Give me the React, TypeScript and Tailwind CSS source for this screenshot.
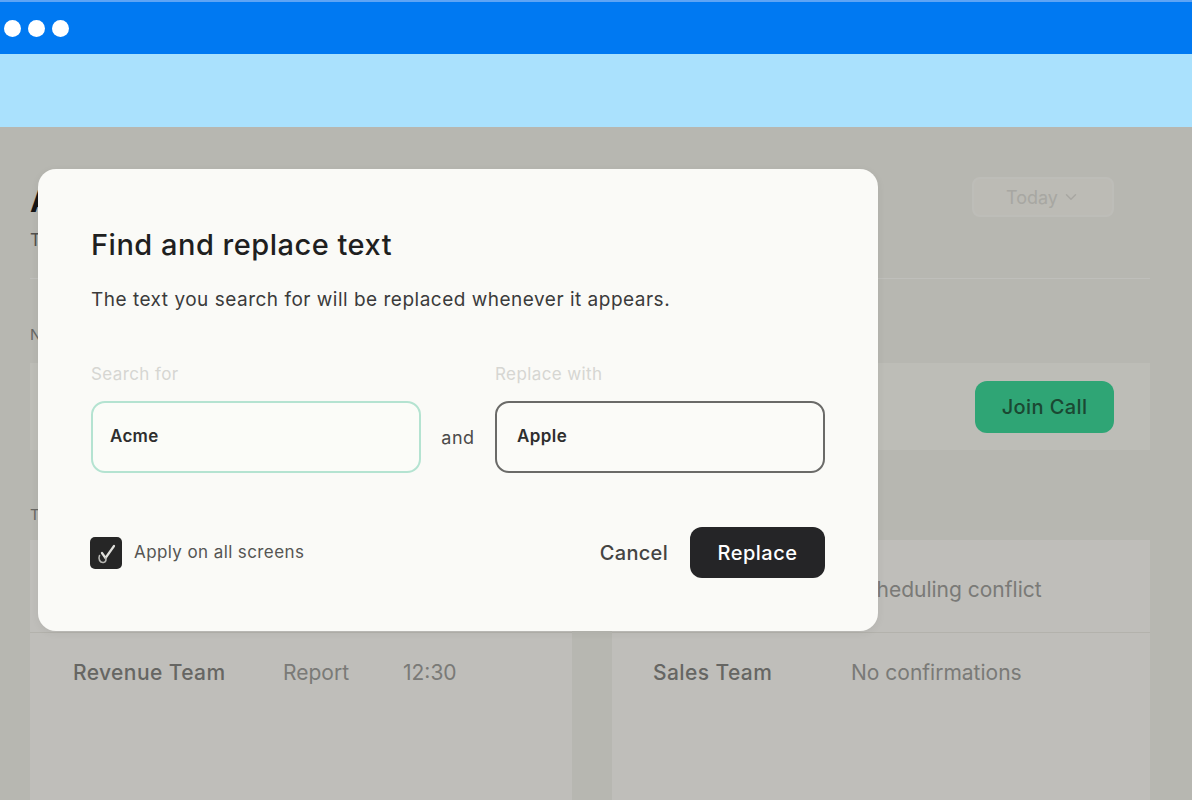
import { ChevronDown } from 'lucide-react'

const font = { fontFamily: 'Inter, "Noto Sans", sans-serif' }

const leftRows = [
  { team: 'Marketing Team', type: 'Review', time: '10:00' },
  { team: 'Revenue Team', type: 'Report', time: '12:30' },
]

const rightRows = [
  { team: 'Design Team', status: 'Scheduling conflict' },
  { team: 'Sales Team', status: 'No confirmations' },
]

const Dashboard = () => (
  <div className="h-full bg-[#f5f4ec] pl-[30px] pr-[42px] pt-[50px]">
    {/* Header */}
    <div className="flex items-start justify-between pr-[36px]">
      <div>
        <h1 className="pt-[4px] text-[30px] font-bold leading-[40px] text-[#1c1c1c]">Agenda</h1>
        <p className="mt-[8px] text-[17px] leading-[22px] text-[#6b6b68]">Thursday, March 14</p>
      </div>
      <button className="flex h-[40px] w-[142px] items-center justify-center gap-1 rounded-[8px] border-2 border-[#fdfcf6] bg-[#fbfaf2] text-[18px] text-[#e0dfd8]">
        Today
        <ChevronDown size={18} strokeWidth={2} />
      </button>
    </div>
    <div className="mt-[27px] border-t border-[#fffffa]" />

    {/* Next up */}
    <p className="mt-[46px] text-[15px] leading-[20px] text-[#8a8a86]">Next up</p>
    <div className="mt-[18px] flex h-[87px] items-center justify-between bg-[#fdfcf5] pl-[43px] pr-[36px]">
      <span className="text-[21px] font-medium text-[#898985]">Product Sync · 09:30</span>
      <button className="h-[52px] w-[139px] rounded-[12px] bg-[#3fdd9d] text-[20px] font-medium tracking-[0.4px] text-[#246043]">
        Join Call
      </button>
    </div>

    {/* Teams */}
    <p className="mt-[55px] text-[15px] leading-[20px] text-[#8a8a86]">Team updates</p>
    <div className="mt-[15px] grid grid-cols-[542px_538px] gap-[40px]">
      <div className="h-[260px] bg-[#fffef8]">
        {leftRows.map((r, i) => (
          <div
            key={r.team}
            className={`flex items-start pl-[43px] text-[21px] leading-[28px] ${i > 0 ? 'border-t border-[#efeee6] pt-[26px]' : 'h-[92px] pt-[36px]'}`}
          >
            <span className="w-[210px] font-medium tracking-[0.4px] text-[#898985]">{r.team}</span>
            <span className="w-[120px] text-[#a3a39f]">{r.type}</span>
            <span className="text-[#a3a39f]">{r.time}</span>
          </div>
        ))}
      </div>
      <div className="h-[260px] bg-[#fffef8]">
        {rightRows.map((r, i) => (
          <div
            key={r.team}
            className={`flex items-start pl-[41px] text-[21px] leading-[28px] ${i > 0 ? 'border-t border-[#efeee6] pt-[26px]' : 'h-[92px] pt-[36px]'}`}
          >
            <span className="w-[198px] font-medium tracking-[0.4px] text-[#898985]">{r.team}</span>
            <span className="text-[#a3a39f]">{r.status}</span>
          </div>
        ))}
      </div>
    </div>
  </div>
)

const CheckIcon = () => (
  <svg width="32" height="32" viewBox="0 0 32 32" fill="none">
    <path d="M12 16 L15.5 21 L24 9" stroke="#e0e0dc" strokeWidth="2.2" strokeLinecap="round" strokeLinejoin="round" />
    <path d="M9.5 18.5 C8 22 10 26 13.5 25.5 C16 25 16.5 22.5 15.5 21" stroke="#b8b8b4" strokeWidth="1.6" strokeLinecap="round" />
  </svg>
)

const FindReplaceModal = () => (
  <div className="absolute left-[38px] top-[42px] w-[840px] rounded-[18px] bg-[#fafaf7] px-[53px] pb-[53px] pt-[60px] shadow-[0_2px_8px_rgba(0,0,0,0.06)]">
    <h2 className="text-[29px] font-medium leading-[32px] tracking-[0.5px] text-[#1f1f1f]">
      Find and replace text
    </h2>
    <p className="mt-[27px] text-[19px] leading-[24px] tracking-[0.5px] text-[#3b3b3b]">
      The text you search for will be replaced whenever it appears.
    </p>

    <div className="mt-[52px] grid grid-cols-[330px_74px_330px] grid-rows-[20px_72px] gap-y-[17px]">
      <span className="text-[17px] leading-[20px] tracking-[0.4px] text-[#d6d6d2]">Search for</span>
      <span />
      <span className="text-[17px] leading-[20px] tracking-[0.4px] text-[#d6d6d2]">Replace with</span>

      <div className="flex items-center rounded-[14px] border-2 border-[#b4e3d1] bg-[#fbfcf8] pl-[17px] text-[17px] font-semibold tracking-[0.3px] text-[#2e2e2e]">
        Acme
      </div>
      <span className="flex items-center justify-center text-[18px] tracking-[0.5px] text-[#4a4a4a]">and</span>
      <div className="flex items-center rounded-[14px] border-2 border-[#6a6a68] bg-[#fbfbf8] pl-[20px] text-[17px] font-semibold tracking-[0.4px] text-[#2e2e2e]">
        Apple
      </div>
    </div>

    <div className="mt-[54px] flex items-center justify-between">
      <label className="flex items-center gap-[12px]">
        <span className="-ml-[1px] flex h-[32px] w-[32px] items-center justify-center rounded-[5px] bg-[#262626]">
          <CheckIcon />
        </span>
        <span className="text-[17px] tracking-[0.4px] text-[#555553]">Apply on all screens</span>
      </label>
      <div className="flex items-center gap-[22px]">
        <button className="text-[20px] font-medium tracking-[0.3px] text-[#444442]">Cancel</button>
        <button className="h-[51px] w-[135px] rounded-[12px] bg-[#252527] text-[20px] font-medium tracking-[0.5px] text-white">
          Replace
        </button>
      </div>
    </div>
  </div>
)

export default function App() {
  return (
    <div className="h-[810px] w-[1200px] overflow-hidden bg-white" style={font}>
      <div className="flex h-[800px] w-[1192px] flex-col">
        {/* Browser bar */}
        <div className="flex h-[54px] shrink-0 items-center gap-[7px] border-t-2 border-[#5ea4f5] bg-[#0079f2] pl-[4px]">
          <span className="h-[17px] w-[17px] rounded-full bg-white" />
          <span className="h-[17px] w-[17px] rounded-full bg-white" />
          <span className="h-[17px] w-[17px] rounded-full bg-white" />
        </div>
        <div className="h-[73px] shrink-0 bg-[#aae1fd]" />

        {/* Page with dialog */}
        <div className="relative min-h-0 flex-1 overflow-hidden">
          <Dashboard />
          <div className="absolute inset-0 bg-black/25" />
          <FindReplaceModal />
        </div>
      </div>
    </div>
  )
}
